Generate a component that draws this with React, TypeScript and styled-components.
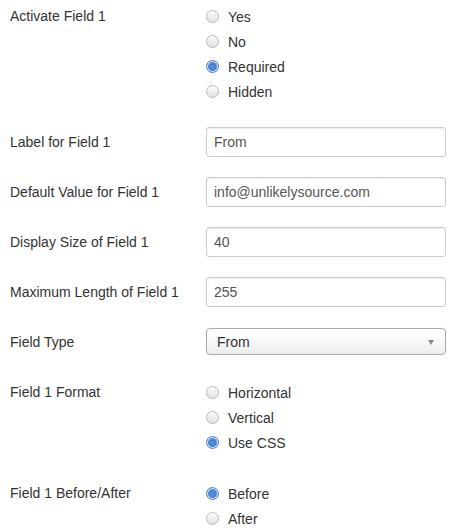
import React from "react";
import styled, { createGlobalStyle } from "styled-components";

const Global = createGlobalStyle`
  html, body { margin: 0; padding: 0; background: #fff; }
  body { font-family: "Liberation Sans", Arial, sans-serif; font-size: 14px; color: #333; }
`;

const Form = styled.div`
  display: flex;
  flex-direction: column;
  gap: 20px;
  padding: 1px 0 0 10px;
`;

const Row = styled.div`
  display: grid;
  grid-template-columns: 196px 240px;
  align-items: start;
`;

const Label = styled.div<{ $radio?: boolean }>`
  line-height: ${(p) => (p.$radio ? "25px" : "30px")};
  padding-top: ${(p) => (p.$radio ? "3px" : "0")};
  color: #333;
  white-space: nowrap;
`;

const RadioGroup = styled.div`
  display: flex;
  flex-direction: column;
  padding: 3px 0;
`;

const RadioItem = styled.label`
  display: flex;
  align-items: center;
  gap: 9px;
  height: 25px;
  color: #333;
`;

const RadioDot = styled.span<{ $on?: boolean }>`
  box-sizing: border-box;
  width: 13px;
  height: 13px;
  border-radius: 50%;
  flex: none;
  border: 1px solid ${(p) => (p.$on ? "#5a82b8" : "#b8b8b8")};
  background: ${(p) =>
    p.$on
      ? "radial-gradient(circle at 50% 55%, #5c97e3 0, #3f7fd6 40%, #6a9edf 70%, #c7dbf3 100%)"
      : "linear-gradient(#fafafa, #e2e2e2)"};
  box-shadow: ${(p) => (p.$on ? "inset 0 0 0 1px #dbe8f8" : "inset 0 1px 1px rgba(255,255,255,0.8)")};
`;

const TextInput = styled.div`
  box-sizing: border-box;
  height: 30px;
  width: 240px;
  border: 1px solid #ccc;
  border-radius: 3px;
  box-shadow: inset 0 1px 1px rgba(0, 0, 0, 0.075);
  padding: 0 7px;
  line-height: 28px;
  color: #555;
  background: #fff;
`;

const Select = styled.div`
  box-sizing: border-box;
  height: 27px;
  width: 240px;
  margin-top: 1px;
  border: 1px solid #aaa;
  border-radius: 4px;
  background: linear-gradient(#fff 20%, #ececec 100%);
  box-shadow: 0 0 2px rgba(0,0,0,0.08);
  display: flex;
  align-items: center;
  justify-content: space-between;
  padding: 0 11px 0 10px;
  color: #333;
`;

const Arrow = styled.span`
  width: 0;
  height: 0;
  border-left: 3.5px solid transparent;
  border-right: 3.5px solid transparent;
  border-top: 5px solid #8a8a8a;
  margin-top: 1px;
`;

type Opt = { label: string; on?: boolean };

const Radios = ({ label, options }: { label: string; options: Opt[] }) => (
  <Row>
    <Label $radio>{label}</Label>
    <RadioGroup>
      {options.map((o) => (
        <RadioItem key={o.label}>
          <RadioDot $on={o.on} />
          {o.label}
        </RadioItem>
      ))}
    </RadioGroup>
  </Row>
);

const Input = ({ label, value }: { label: string; value: string }) => (
  <Row>
    <Label>{label}</Label>
    <TextInput>{value}</TextInput>
  </Row>
);

export default function App() {
  return (
    <>
      <Global />
      <Form>
        <Radios
          label="Activate Field 1"
          options={[{ label: "Yes" }, { label: "No" }, { label: "Required", on: true }, { label: "Hidden" }]}
        />
        <Input label="Label for Field 1" value="From" />
        <Input label="Default Value for Field 1" value="info@unlikelysource.com" />
        <Input label="Display Size of Field 1" value="40" />
        <Input label="Maximum Length of Field 1" value="255" />
        <Row>
          <Label>Field Type</Label>
          <Select>
            <span>From</span>
            <Arrow />
          </Select>
        </Row>
        <Radios
          label="Field 1 Format"
          options={[{ label: "Horizontal" }, { label: "Vertical" }, { label: "Use CSS", on: true }]}
        />
        <Radios label="Field 1 Before/After" options={[{ label: "Before", on: true }, { label: "After" }]} />
      </Form>
    </>
  );
}
